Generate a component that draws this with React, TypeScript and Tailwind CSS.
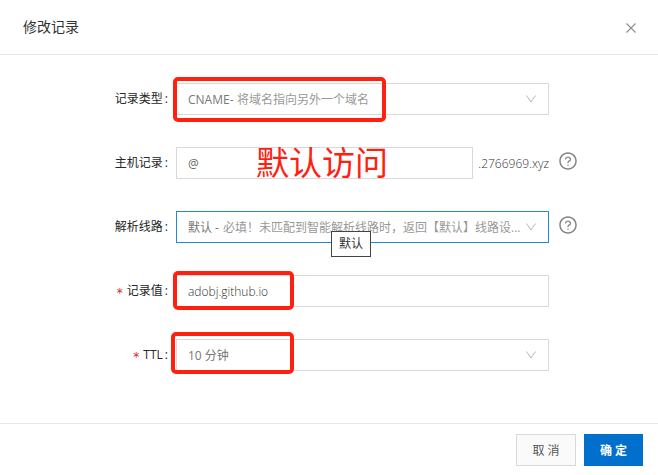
import type { ReactNode } from "react";
import { AiOutlineQuestionCircle } from "react-icons/ai";

const RECORD_TYPES = ["CNAME-", "A-", "MX-", "TXT-"];
const LINES = ["默认 -", "电信 -", "联通 -", "移动 -"];
const TTLS = ["10 分钟", "30 分钟", "1 小时", "12 小时"];

function Row({
    id,
    label,
    required,
    help,
    children,
}: {
    id: string;
    label: string;
    required?: boolean;
    help?: boolean;
    children: ReactNode;
}) {
    return (
        <div className="flex items-center">
            <label
                htmlFor={id}
                className="flex w-[168px] shrink-0 items-center justify-end text-[#262626]"
            >
                {required && (
                    <span className="mr-1 pt-1 font-['DejaVu_Sans',sans-serif] text-[#e02020]">*</span>
                )}
                {label}
                <span className="ml-0.5">:</span>
            </label>
            <div className="relative ml-2 flex min-w-0 flex-1 items-center">{children}</div>
            <div className="w-[109px] shrink-0 pb-1 pl-[9px]">
                {help && (
                    <button type="button" aria-label="帮助" className="block text-[#858585]">
                        <AiOutlineQuestionCircle size={20} />
                    </button>
                )}
            </div>
        </div>
    );
}

function Select({
    id,
    options,
    hint,
    active,
}: {
    id: string;
    options: string[];
    hint?: ReactNode;
    active?: boolean;
}) {
    return (
        <>
            <select
                id={id}
                className={`h-8 w-full appearance-none border bg-white pt-0.5 pl-[11px] text-[#777] outline-none ${
                    active ? "border-[#1f8ad6]" : "border-[#d9d9d9]"
                }`}
            >
                {options.map((o) => (
                    <option key={o}>{o}</option>
                ))}
            </select>
            {hint}
            <svg
                viewBox="0 0 10 8"
                className="pointer-events-none absolute right-[13px] h-2 w-[10px] fill-none stroke-[#b4b4b4]"
            >
                <path d="M0.5 0.5 L5 7 L9.5 0.5" />
            </svg>
        </>
    );
}

export default function App() {
    return (
        <form
            onSubmit={(e) => e.preventDefault()}
            className="bg-white font-['Open_Sans','Noto_Sans_CJK_SC',sans-serif] text-xs"
        >
            <header className="flex h-[55px] items-center justify-between border-b border-[#e3e9ef] pr-[22px] pl-[23px]">
                <h1 className="text-sm text-[#333]">修改记录</h1>
                <button type="button" aria-label="关闭" className="block pt-0.5">
                    <svg viewBox="0 0 10 10" className="h-[10px] w-[10px] fill-none stroke-[#909090]">
                        <path d="M0.5 0.5 L9.5 9.5 M9.5 0.5 L0.5 9.5" strokeWidth="1.2" />
                    </svg>
                </button>
            </header>

            <main className="flex flex-col gap-8 pt-7 pb-[52px]">
                <Row id="type" label="记录类型">
                    <Select
                        id="type"
                        options={RECORD_TYPES}
                        hint={
                            <span className="pointer-events-none absolute left-[61px] pt-0.5 text-[#999]">
                                将域名指向另外一个域名
                            </span>
                        }
                    />
                    <div className="pointer-events-none absolute -top-[6px] -left-[3px] h-[45px] w-[213px] rounded-[5px] border-4 border-[#ff2010]" />
                </Row>

                <Row id="host" label="主机记录" help>
                    <input
                        id="host"
                        defaultValue="@"
                        className="h-8 min-w-0 flex-1 border border-[#d9d9d9] pl-[11px] text-[#666] outline-none"
                    />
                    <span className="ml-[5px] pt-0.5 font-light text-[#333]">.2766969.xyz</span>
                    <span className="pointer-events-none absolute left-20 text-[33px] leading-8 text-[#ff2010]">
                        默认访问
                    </span>
                </Row>

                <Row id="line" label="解析线路" help>
                    <Select
                        id="line"
                        options={LINES}
                        active
                        hint={
                            <span className="pointer-events-none absolute right-6 left-[47px] truncate pt-0.5 text-[#999]">
                                必填！未匹配到智能解析线路时，返回【默认】线路设...
                            </span>
                        }
                    />
                    <div
                        role="tooltip"
                        className="absolute top-5 left-[155px] z-10 border border-[#444] bg-white px-[7px] py-[3px] leading-[18px] text-[#333]"
                    >
                        默认
                    </div>
                </Row>

                <Row id="value" label="记录值" required>
                    <input
                        id="value"
                        defaultValue="adobj.github.io"
                        className="h-8 w-full border border-[#d9d9d9] pl-[11px] font-light text-[#333] outline-none"
                    />
                    <div className="pointer-events-none absolute -top-1 -left-[3px] h-[39px] w-[121px] rounded-[5px] border-4 border-[#ff2010]" />
                </Row>

                <Row id="ttl" label="TTL" required>
                    <Select id="ttl" options={TTLS} />
                    <div className="pointer-events-none absolute -top-[7px] -left-[5px] h-[42px] w-[123px] rounded-[5px] border-4 border-[#ff2010]" />
                </Row>
            </main>

            <footer className="flex justify-end gap-2 border-t border-[#e8e8e8] pt-[10px] pr-[15px] pb-2">
                <button type="button" className="h-8 w-[60px] border border-[#d9d9d9] bg-[#fafafa] pt-0.5 text-[#555]">
                    取 消
                </button>
                <button type="submit" className="h-8 w-[59px] bg-[#0070cc] pt-0.5 font-bold text-white">
                    确 定
                </button>
            </footer>
        </form>
    );
}
